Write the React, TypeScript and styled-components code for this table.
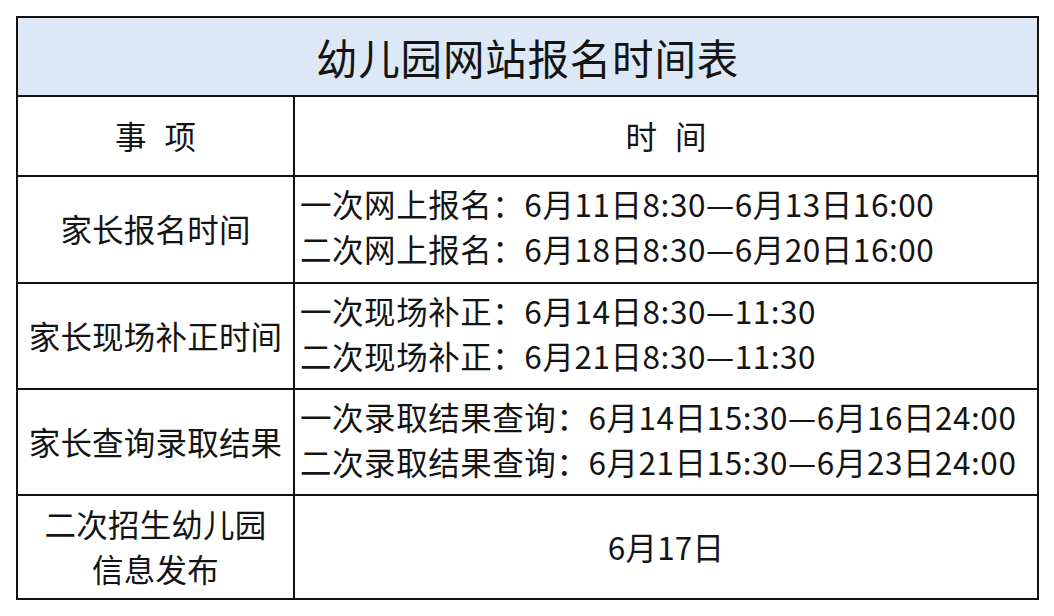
import styled, { createGlobalStyle } from "styled-components";

const GlobalStyle = createGlobalStyle`
  html, body {
    margin: 0;
    padding: 0;
    background: #ffffff;
  }
  body {
    font-family: "Noto Sans CJK SC", "Noto Sans", sans-serif;
    color: #141414;
  }
`;

const Page = styled.div`
  width: 1054px;
  height: 616px;
  padding: 16px 0 0 16px;
  box-sizing: border-box;
`;

const Table = styled.div`
  width: 1023px;
  height: 584px;
  box-sizing: border-box;
  border: 2.5px solid #111;
  display: grid;
  grid-template-columns: 277px 1fr;
  grid-template-rows: 79px 80px 107px 106px 106px 1fr;
`;

const Cell = styled.div<{ $last?: boolean; $bottom?: boolean; $align?: "center" | "left" }>`
  display: flex;
  flex-direction: column;
  justify-content: center;
  align-items: ${({ $align }) => ($align === "left" ? "flex-start" : "center")};
  padding: ${({ $align }) => ($align === "left" ? "0 0 7px 5px" : "0 0 2px 0")};
  border-right: ${({ $last }) => ($last ? "none" : "2px solid #111")};
  border-bottom: ${({ $bottom }) => ($bottom ? "none" : "2px solid #111")};
  font-size: 31.5px;
  line-height: 45px;
  white-space: nowrap;
  text-align: center;
  letter-spacing: ${({ $align }) => ($align === "left" ? "0.55px" : "0.2px")};
`;

const TitleCell = styled.div`
  grid-column: 1 / span 2;
  background: #dce8f5;
  border-bottom: 2.5px solid #111;
  display: flex;
  align-items: center;
  justify-content: center;
  font-size: 41.5px;
  letter-spacing: 0.8px;
`;

const Spaced = styled.span`
  letter-spacing: 18px;
  margin-right: -18px;
`;

const Line = styled.div``;

type Row = { item: string[]; times: string[]; center?: boolean };

const rows: Row[] = [
  {
    item: ["家长报名时间"],
    times: ["一次网上报名：6月11日8:30—6月13日16:00", "二次网上报名：6月18日8:30—6月20日16:00"],
  },
  {
    item: ["家长现场补正时间"],
    times: ["一次现场补正：6月14日8:30—11:30", "二次现场补正：6月21日8:30—11:30"],
  },
  {
    item: ["家长查询录取结果"],
    times: [
      "一次录取结果查询：6月14日15:30—6月16日24:00",
      "二次录取结果查询：6月21日15:30—6月23日24:00",
    ],
  },
  {
    item: ["二次招生幼儿园", "信息发布"],
    times: ["6月17日"],
    center: true,
  },
];

export default function App() {
  return (
    <Page>
      <GlobalStyle />
      <Table>
        <TitleCell>幼儿园网站报名时间表</TitleCell>
        <Cell>
          <Spaced>事项</Spaced>
        </Cell>
        <Cell $last>
          <Spaced>时间</Spaced>
        </Cell>
        {rows.map((row, i) => {
          const bottom = i === rows.length - 1;
          return [
            <Cell key={`i${i}`} $bottom={bottom}>
              {row.item.map((t) => (
                <Line key={t}>{t}</Line>
              ))}
            </Cell>,
            <Cell key={`t${i}`} $bottom={bottom} $last $align={row.center ? "center" : "left"}>
              {row.times.map((t) => (
                <Line key={t}>{t}</Line>
              ))}
            </Cell>,
          ];
        })}
      </Table>
    </Page>
  );
}
